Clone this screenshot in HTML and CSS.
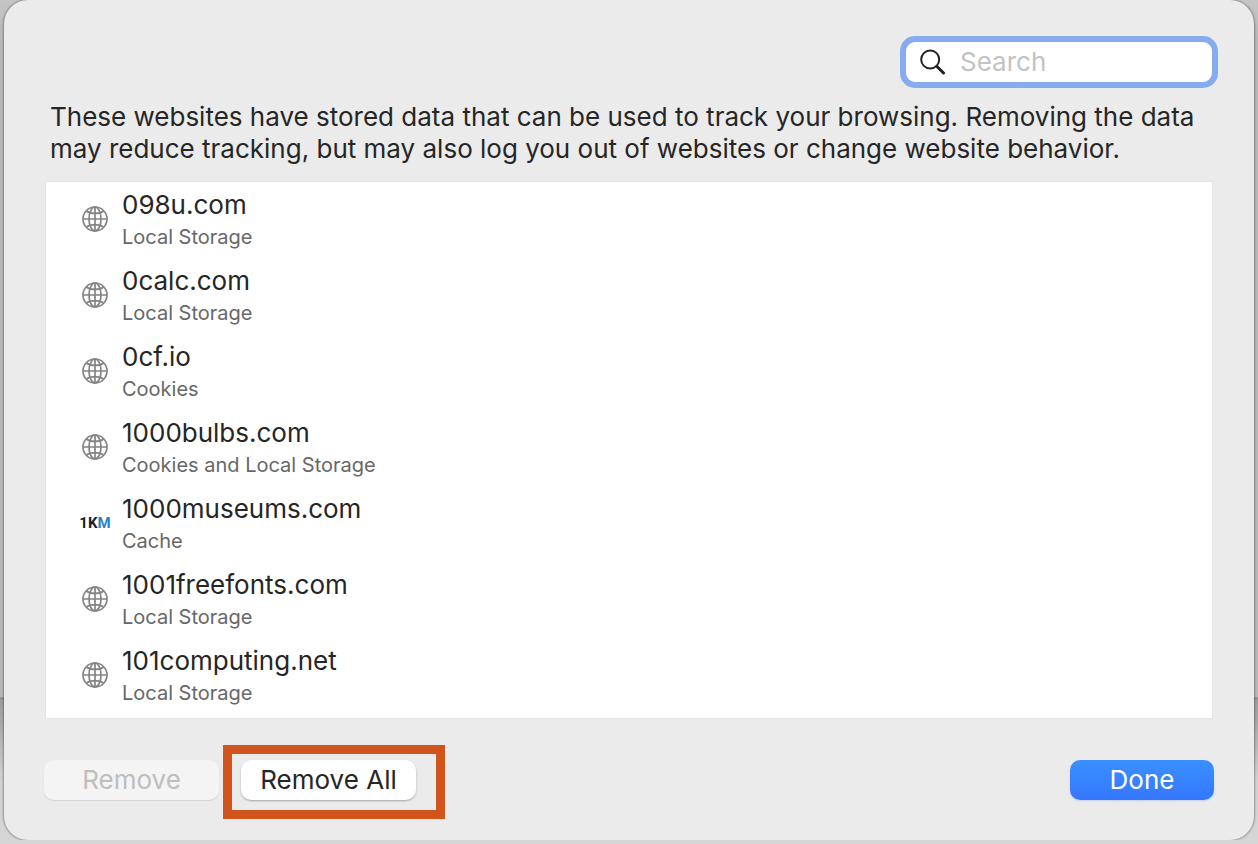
FILE: index.html
```
<!DOCTYPE html>
<html lang="en">
<head>
    <title>Manage Website Data</title>
    <meta charset="UTF-8">
    <meta name="viewport" content="width=device-width, initial-scale=1">
    <link rel="stylesheet" href="styles.css">
</head>
<body>
    <svg class="symbols" aria-hidden="true">
        <symbol id="globe" viewBox="0 0 26 26">
            <g fill="none" stroke="currentColor" stroke-width="1.7">
                <circle cx="13" cy="13" r="12" />
                <ellipse cx="13" cy="13" rx="6" ry="12" />
                <path d="M13 1v24M1 13h24M4.5 5C8.5 8.2 17.5 8.2 21.5 5M4.5 21C8.5 17.8 17.5 17.8 21.5 21" />
            </g>
        </symbol>
    </svg>
    <main class="sheet">
        <div class="toolbar">
            <label class="search">
                <svg class="search-icon" viewBox="0 0 26 26" aria-hidden="true">
                    <circle cx="10.2" cy="10.5" r="9" />
                    <path class="handle" d="M17 17.5L23.5 24" />
                </svg>
                <input type="search" placeholder="Search" aria-label="Search">
            </label>
        </div>
        <p class="message">These websites have stored data that can be used to track your browsing. Removing the data may reduce tracking, but may also log you out of websites or change website behavior.</p>
        <ul class="sites">
            <li class="site">
                <svg class="icon"><use href="#globe" /></svg>
                <div><div class="name">098u.com</div><div class="kind">Local Storage</div></div>
            </li>
            <li class="site">
                <svg class="icon"><use href="#globe" /></svg>
                <div><div class="name">0calc.com</div><div class="kind">Local Storage</div></div>
            </li>
            <li class="site">
                <svg class="icon"><use href="#globe" /></svg>
                <div><div class="name">0cf.io</div><div class="kind">Cookies</div></div>
            </li>
            <li class="site">
                <svg class="icon"><use href="#globe" /></svg>
                <div><div class="name">1000bulbs.com</div><div class="kind">Cookies and Local Storage</div></div>
            </li>
            <li class="site">
                <div class="icon favicon">1K<span>M</span></div>
                <div><div class="name">1000museums.com</div><div class="kind">Cache</div></div>
            </li>
            <li class="site">
                <svg class="icon"><use href="#globe" /></svg>
                <div><div class="name">1001freefonts.com</div><div class="kind">Local Storage</div></div>
            </li>
            <li class="site">
                <svg class="icon"><use href="#globe" /></svg>
                <div><div class="name">101computing.net</div><div class="kind">Local Storage</div></div>
            </li>
        </ul>
        <div class="buttons">
            <button type="button" disabled>Remove</button>
            <div class="highlight"><button type="button">Remove All</button></div>
            <button type="button" class="done">Done</button>
        </div>
    </main>
</body>
</html>
```
FILE: styles.css
```
html {
    min-height: 100%;
    background: linear-gradient(#c6c6c6, #b8b8b8 40px, #b8b8b8 697px, #858585 698px, #a0a0a0 700px, #a8a8a8 720px, #d2d2d2 780px, #d6d6d6);
}

body {
    margin: 0;
    font-family: Inter, "Liberation Sans", sans-serif;
    font-size: 26px;
    line-height: 32px;
    color: #262626;
}

.symbols {
    display: none;
}

.sheet {
    box-sizing: border-box;
    margin: 0 4px;
    padding: 36px 40px 40px;
    background: #ebebeb;
    border-radius: 24px;
    box-shadow: 0 0 2px 1px rgba(0, 0, 0, 0.3);
}

.toolbar {
    display: flex;
    justify-content: flex-end;
    margin-right: -4px;
}

.search {
    display: flex;
    align-items: center;
    gap: 14px;
    box-sizing: border-box;
    width: 318px;
    height: 52px;
    padding: 0 14px;
    border: 6px solid #86abef;
    border-radius: 15px;
    background: white;
}

.search-icon {
    flex: none;
    width: 26px;
    height: 26px;
    fill: none;
    stroke: #222;
    stroke-width: 2;
}

.search-icon .handle {
    stroke-width: 3;
    stroke-linecap: round;
}

.search input {
    flex: 1;
    min-width: 0;
    padding: 0;
    border: 0;
    outline: 0;
    background: none;
    font: inherit;
}

.search input::placeholder {
    color: #c3c3c3;
}

.message {
    margin: 13px 6px 16px;
}

.sites {
    margin: 0 1px;
    padding: 7px 36px 9px;
    border: 1px solid #e4e4e4;
    background: white;
    list-style: none;
}

.site {
    display: flex;
    gap: 14px;
}

.site + .site {
    margin-top: 12px;
}

.icon {
    flex: none;
    width: 26px;
    height: 26px;
    margin-top: 17px;
    color: #848484;
}

.favicon {
    display: flex;
    align-items: center;
    justify-content: center;
    font: bold 15px Roboto, sans-serif;
    color: #1c1c24;
}

.favicon span {
    color: #2b7fbd;
}

.kind {
    font-size: 20px;
    color: #676767;
}

.buttons {
    display: flex;
    gap: 22px;
    margin-top: 41px;
}

button {
    width: 175px;
    height: 40px;
    padding: 0;
    border: 0;
    border-radius: 10px;
    background: white;
    box-shadow: 0 1px 2px rgba(0, 0, 0, 0.3);
    font: inherit;
    color: inherit;
}

button:disabled {
    background: #f4f4f4;
    box-shadow: 0 1px 1px rgba(0, 0, 0, 0.1);
    color: #bebebe;
}

.highlight {
    position: relative;
}

.highlight::after {
    content: "";
    position: absolute;
    inset: -15px -29px -19px -18px;
    border: 9px solid #d0541b;
    pointer-events: none;
}

.done {
    width: 144px;
    margin-left: auto;
    background: linear-gradient(#3a90ff, #3577ff);
    box-shadow: 0 1px 2px rgba(40, 90, 200, 0.2);
    color: white;
}
```
